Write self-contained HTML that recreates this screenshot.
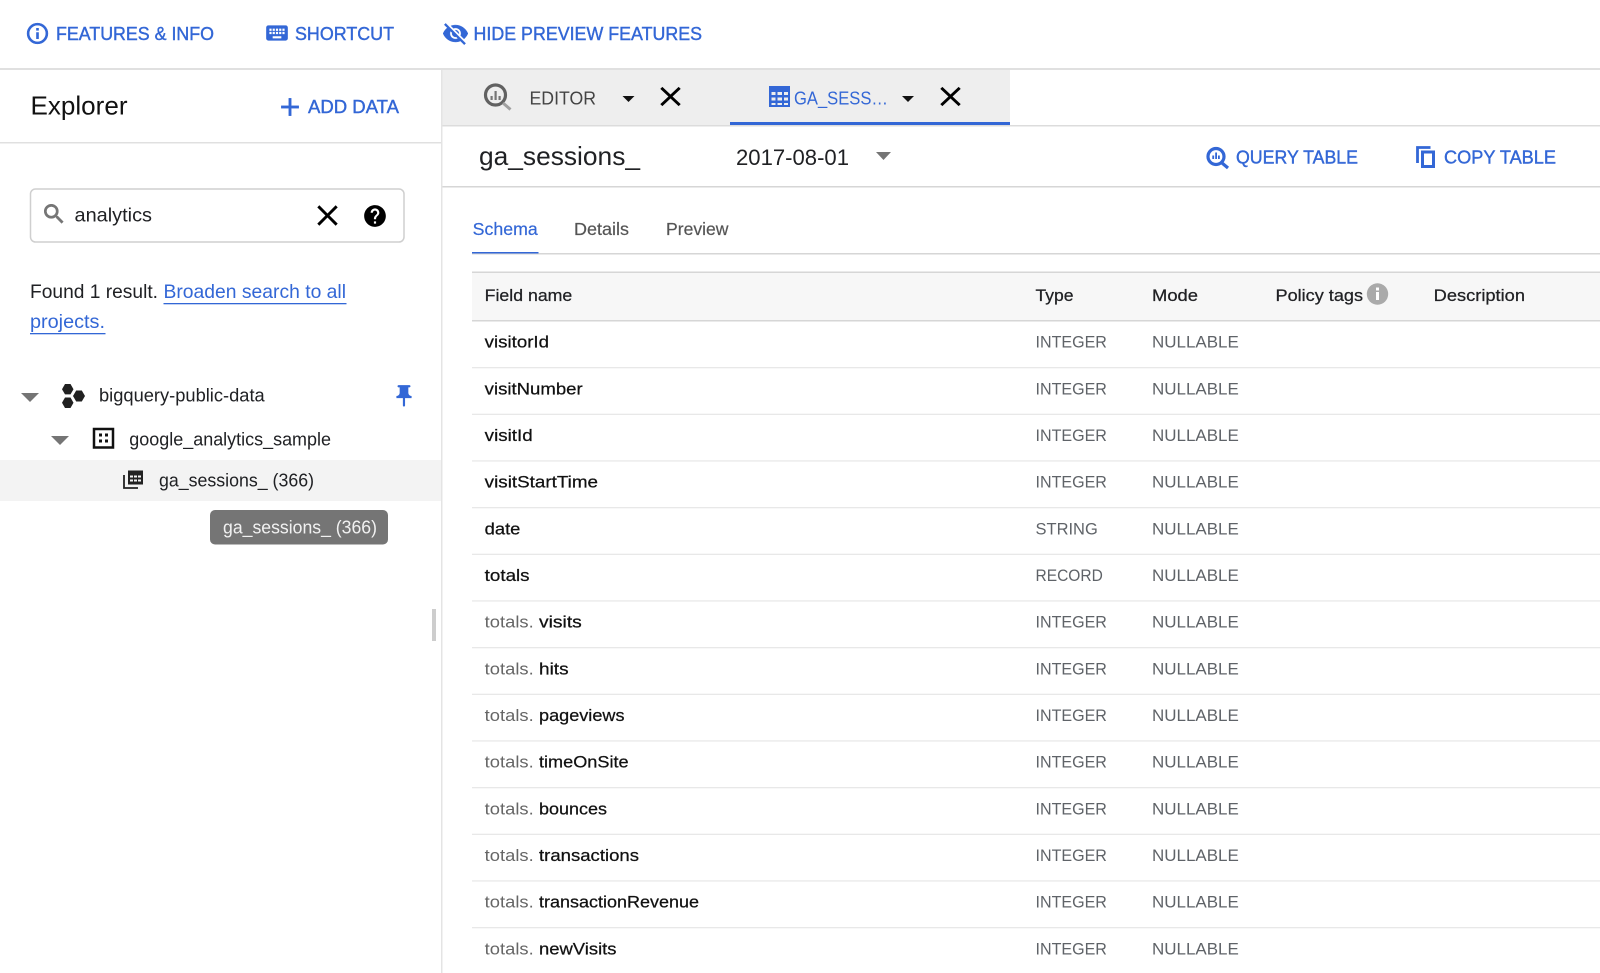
<!DOCTYPE html>
<html lang="en">
<head>
<meta charset="utf-8">
<title>BigQuery Explorer</title>
<style>
html,body{margin:0;padding:0;background:#fff;width:1600px;height:973px;overflow:hidden}
svg{display:block}
svg.root{filter:blur(.3px)}
text{font-family:"Liberation Sans",sans-serif;white-space:pre}
.b{fill:#3367d6;font-size:18.500px;stroke:#3367d6;stroke-width:.4px}
.f{fill:#111;font-size:17px;stroke:#111;stroke-width:.25px}
.g{fill:#666;font-size:17px}
.t{fill:#5f6368;font-size:17px}
.h{fill:#202124;font-size:17px;stroke:#202124;stroke-width:.25px}
.l{fill:#202124;font-size:18px}
</style>
</head>
<body>
<svg class="root" width="1600" height="973" viewBox="0 0 1600 973" xmlns="http://www.w3.org/2000/svg">
<rect width="1600" height="973" fill="#fff"/>

<!-- top bar -->
<rect x="0" y="68" width="1600" height="2" fill="#e0e0e0"/>
<svg x="25" y="21" width="25" height="25" viewBox="0 0 24 24" fill="#3367d6" stroke="#3367d6" stroke-width=".5"><path d="M11 7h2v2h-2zm0 4h2v6h-2zm1-9C6.48 2 2 6.48 2 12s4.48 10 10 10 10-4.48 10-10S17.52 2 12 2zm0 18c-4.41 0-8-3.59-8-8s3.59-8 8-8 8 3.59 8 8-3.59 8-8 8z"/></svg>
<text class="b" x="56" y="40" textLength="158" lengthAdjust="spacingAndGlyphs">FEATURES &amp; INFO</text>
<svg x="264" y="20" width="26" height="26" viewBox="0 0 24 24" fill="#3367d6"><path d="M20 5H4c-1.1 0-1.99.9-1.99 2L2 17c0 1.1.9 2 2 2h16c1.1 0 2-.9 2-2V7c0-1.1-.9-2-2-2zm-9 3h2v2h-2V8zm0 3h2v2h-2v-2zM8 8h2v2H8V8zm0 3h2v2H8v-2zm-1 2H5v-2h2v2zm0-3H5V8h2v2zm9 7H8v-2h8v2zm0-4h-2v-2h2v2zm0-3h-2V8h2v2zm3 3h-2v-2h2v2zm0-3h-2V8h2v2z"/></svg>
<text class="b" x="295" y="40" textLength="99" lengthAdjust="spacingAndGlyphs">SHORTCUT</text>
<svg x="442" y="20" width="27" height="27" viewBox="0 0 24 24" fill="#3367d6" stroke="#3367d6" stroke-width=".4"><path d="M12 7c2.76 0 5 2.24 5 5 0 .65-.13 1.26-.36 1.83l2.92 2.92c1.51-1.26 2.7-2.89 3.43-4.75-1.73-4.39-6-7.5-11-7.5-1.4 0-2.74.25-3.98.7l2.16 2.16C10.74 7.13 11.35 7 12 7zM2 4.27l2.28 2.28.46.46C3.08 8.3 1.78 10.02 1 12c1.73 4.39 6 7.5 11 7.5 1.55 0 3.03-.3 4.38-.84l.42.42L19.73 22 21 20.73 3.27 3 2 4.27zM7.53 9.8l1.55 1.55c-.05.21-.08.43-.08.65 0 1.66 1.34 3 3 3 .22 0 .44-.03.65-.08l1.55 1.55c-.67.33-1.41.53-2.2.53-2.76 0-5-2.24-5-5 0-.79.2-1.53.53-2.2zm4.31-.78l3.15 3.15.02-.16c0-1.66-1.34-3-3-3l-.17.01z"/></svg>
<text class="b" x="473.500" y="40" textLength="228.500" lengthAdjust="spacingAndGlyphs">HIDE PREVIEW FEATURES</text>

<!-- sidebar -->
<rect x="441" y="70" width="1.500" height="903" fill="#e4e4e4"/>
<text x="30.500" y="114.500" font-size="26" fill="#111" textLength="97" lengthAdjust="spacingAndGlyphs">Explorer</text>
<svg x="275" y="92" width="30" height="30" viewBox="0 0 24 24" fill="#3367d6" stroke="#3367d6" stroke-width=".3"><path d="M19 13h-6v6h-2v-6H5v-2h6V5h2v6h6v2z"/></svg>
<text class="b" x="308" y="113" textLength="91" lengthAdjust="spacingAndGlyphs">ADD DATA</text>
<rect x="0" y="142" width="441" height="1.500" fill="#e0e0e0"/>

<rect x="30.500" y="189" width="373.500" height="53" rx="5" fill="#fff" stroke="#cfcfcf" stroke-width="1.500"/>
<svg x="41" y="201" width="26" height="26" viewBox="0 0 24 24" fill="#757575" stroke="#757575" stroke-width=".5"><path d="M15.500 14h-.79l-.28-.27C15.410 12.590 16 11.110 16 9.500 16 5.910 13.090 3 9.500 3S3 5.910 3 9.500 5.910 16 9.500 16c1.610 0 3.090-.59 4.230-1.570l.27.28v.79l5 4.990L20.490 19l-4.990-5zm-6 0C7.010 14 5 11.990 5 9.500S7.010 5 9.500 5 14 7.010 14 9.500 11.990 14 9.500 14z"/></svg>
<text x="74.500" y="221.700" font-size="19.500" fill="#202124" textLength="77.500" lengthAdjust="spacingAndGlyphs">analytics</text>
<svg x="310" y="198" width="35" height="35" viewBox="0 0 24 24" fill="#000"><path d="M19 6.410L17.590 5 12 10.590 6.410 5 5 6.410 10.590 12 5 17.590 6.410 19 12 13.410 17.590 19 19 17.590 13.410 12z"/></svg>
<svg x="362" y="203" width="26" height="26" viewBox="0 0 24 24" fill="#000"><path d="M12 2C6.480 2 2 6.480 2 12s4.480 10 10 10 10-4.480 10-10S17.520 2 12 2zm1 17h-2v-2h2v2zm2.070-7.750l-.9.92C13.450 12.900 13 13.500 13 15h-2v-.5c0-1.100.45-2.100 1.170-2.830l1.240-1.260c.37-.36.59-.86.59-1.410 0-1.100-.9-2-2-2s-2 .9-2 2H8c0-2.210 1.790-4 4-4s4 1.790 4 4c0 .88-.36 1.680-.93 2.250z"/></svg>

<text x="30" y="298" font-size="19.500" fill="#202124" textLength="128" lengthAdjust="spacingAndGlyphs">Found 1 result.</text>
<text x="163.500" y="298" font-size="19.500" fill="#3367d6" textLength="182.500" lengthAdjust="spacingAndGlyphs">Broaden search to all</text>
<rect x="163.500" y="303" width="183" height="1.300" fill="#3367d6"/>
<text x="30" y="328" font-size="19.500" fill="#3367d6" textLength="75" lengthAdjust="spacingAndGlyphs">projects.</text>
<rect x="30" y="333" width="75.500" height="1.300" fill="#3367d6"/>

<!-- tree -->
<path d="M21 393h18l-9 9z" fill="#757575"/>
<g fill="#212121">
<path d="M65 384h5.500l3 5.200-3 5.200H65l-3-5.200z"/>
<path d="M65 397.500h5.500l3 5.200-3 5.300H65l-3-5.300z"/>
<path d="M76.200 390.500h5.600l3.200 5.500-3.200 5.500h-5.600l-3.200-5.500z"/>
</g>
<text class="l" x="99" y="401.700" textLength="165.700" lengthAdjust="spacingAndGlyphs">bigquery-public-data</text>
<svg x="391" y="383" width="26" height="26" viewBox="0 0 24 24" fill="#3367d6"><path d="M16 9V4h1c.55 0 1-.45 1-1s-.45-1-1-1H7c-.55 0-1 .45-1 1s.45 1 1 1h1v5c0 1.660-1.340 3-3 3v2h5.970v7l1 1 1-1v-7H19v-2c-1.660 0-3-1.340-3-3z"/></svg>
<path d="M51 436h18l-9 9z" fill="#757575"/>
<rect x="94" y="429" width="19" height="18.500" fill="none" stroke="#111" stroke-width="2.500"/>
<g fill="#111"><rect x="99" y="433.500" width="3" height="3"/><rect x="105" y="433.500" width="3" height="3"/><rect x="99" y="439.500" width="3" height="3"/><rect x="105" y="439.500" width="3" height="3"/></g>
<text class="l" x="129.300" y="445.300" textLength="201.700" lengthAdjust="spacingAndGlyphs">google_analytics_sample</text>
<rect x="0" y="460" width="441" height="41" fill="#f3f3f3"/>
<g fill="none" stroke="#222" stroke-width="1.800">
<path d="M124 475v13h14"/>
<rect x="128" y="470.500" width="15" height="14" fill="#222" stroke="none"/>
</g>
<g fill="#f3f3f3"><rect x="130" y="475.500" width="3" height="2"/><rect x="134" y="475.500" width="3" height="2"/><rect x="138" y="475.500" width="3" height="2"/><rect x="130" y="479.500" width="3" height="2"/><rect x="134" y="479.500" width="3" height="2"/><rect x="138" y="479.500" width="3" height="2"/></g>
<text class="l" x="159" y="486.700" textLength="155" lengthAdjust="spacingAndGlyphs">ga_sessions_ (366)</text>
<rect x="210" y="510" width="178" height="34.500" rx="5" fill="#757575"/>
<text x="223" y="533.300" font-size="18" fill="#f1f1f1" textLength="154" lengthAdjust="spacingAndGlyphs">ga_sessions_ (366)</text>
<rect x="432" y="609" width="4" height="32" fill="#cdcdcd"/>

<!-- tab bar -->
<rect x="442.500" y="70" width="567.500" height="55" fill="#eeeeee"/>
<rect x="442.500" y="125" width="1157.500" height="1.500" fill="#dcdcdc"/>
<g fill="none" stroke="#616161" stroke-width="3.200">
<circle cx="495.500" cy="95" r="10"/>
<path d="M503 103l7.500 6.500" stroke="#a0a0a0" stroke-width="3"/>
</g>
<g fill="#757575"><rect x="494.500" y="91" width="2.200" height="9"/><rect x="490.500" y="96" width="2.200" height="4"/><rect x="498.500" y="96" width="2.200" height="4"/></g>
<text x="529.500" y="104.500" font-size="18.500" fill="#444" textLength="66.500" lengthAdjust="spacingAndGlyphs">EDITOR</text>
<path d="M622.500 96h12l-6 6z" fill="#111"/>
<svg x="653" y="80" width="35" height="33" viewBox="0 0 24 24" preserveAspectRatio="none" fill="#000"><path d="M19 6.410L17.590 5 12 10.590 6.410 5 5 6.410 10.590 12 5 17.590 6.410 19 12 13.410 17.590 19 19 17.590 13.410 12z"/></svg>
<path fill-rule="evenodd" d="M769 86h21v21h-21zM771.500 92v3h4v-3zm6 0v3h4.500v-3zm6.500 0v3h4v-3zM771.500 97.500v3h4v-3zm6 0v3h4.500v-3zm6.500 0v3h4v-3zM771.500 103v2h4v-2zm6 0v2h4.500v-2zm6.500 0v2h4v-2z" fill="#3367d6"/>
<text x="794" y="104.500" font-size="18.500" fill="#3367d6" textLength="94" lengthAdjust="spacingAndGlyphs">GA_SESS…</text>
<path d="M902 96h12l-6 6z" fill="#111"/>
<svg x="933" y="80" width="35" height="33" viewBox="0 0 24 24" preserveAspectRatio="none" fill="#000"><path d="M19 6.410L17.590 5 12 10.590 6.410 5 5 6.410 10.590 12 5 17.590 6.410 19 12 13.410 17.590 19 19 17.590 13.410 12z"/></svg>
<rect x="730" y="122" width="280" height="3" fill="#3367d6"/>

<!-- title row -->
<text x="479" y="165" font-size="26" fill="#202124" textLength="161" lengthAdjust="spacingAndGlyphs">ga_sessions_</text>
<text x="736" y="165" font-size="22" fill="#202124" textLength="113" lengthAdjust="spacingAndGlyphs">2017-08-01</text>
<path d="M876 152h15l-7.500 8z" fill="#757575"/>
<g fill="none" stroke="#3367d6" stroke-width="3.200"><circle cx="1216" cy="156.500" r="8"/><path d="M1222 163l6 5"/></g>
<g fill="#3367d6"><rect x="1215.200" y="152.500" width="1.800" height="6.500"/><rect x="1212.300" y="155.500" width="1.800" height="3.500"/><rect x="1218" y="155.500" width="1.800" height="3.500"/></g>
<text class="b" x="1236" y="163.300" textLength="122" lengthAdjust="spacingAndGlyphs">QUERY TABLE</text>
<path d="M1417.500 163v-15.500h13" fill="none" stroke="#3367d6" stroke-width="2.800"/>
<rect x="1422.500" y="152" width="11" height="14.500" fill="none" stroke="#3367d6" stroke-width="3"/>
<text class="b" x="1444" y="163.300" textLength="112" lengthAdjust="spacingAndGlyphs">COPY TABLE</text>
<rect x="442.500" y="186" width="1157.500" height="1.500" fill="#d6d6d6"/>

<!-- tabs -->
<text x="472.700" y="235" font-size="17.500" fill="#3367d6" stroke="#3367d6" stroke-width=".2" textLength="65" lengthAdjust="spacingAndGlyphs">Schema</text>
<text x="574" y="235" font-size="17.500" fill="#555" stroke="#555" stroke-width=".2" textLength="55" lengthAdjust="spacingAndGlyphs">Details</text>
<text x="666" y="235" font-size="17.500" fill="#555" stroke="#555" stroke-width=".2" textLength="62.500" lengthAdjust="spacingAndGlyphs">Preview</text>
<rect x="472" y="253" width="1128" height="1.500" fill="#d6d6d6"/>
<rect x="472" y="252" width="66.500" height="1.500" fill="#3367d6"/>

<!-- table header -->
<rect x="472" y="272" width="1128" height="49" fill="#f7f7f7"/>
<rect x="472" y="271.500" width="1128" height="1.500" fill="#d6d6d6"/>
<rect x="472" y="320" width="1128" height="1.500" fill="#d6d6d6"/>
<text class="h" x="484.700" y="301" textLength="87.600" lengthAdjust="spacingAndGlyphs">Field name</text>
<text class="h" x="1035.500" y="301" textLength="38" lengthAdjust="spacingAndGlyphs">Type</text>
<text class="h" x="1152" y="301" textLength="46" lengthAdjust="spacingAndGlyphs">Mode</text>
<text class="h" x="1275.500" y="301" textLength="87.500" lengthAdjust="spacingAndGlyphs">Policy tags</text>
<circle cx="1377.500" cy="294" r="10.700" fill="#aaaaaa"/>
<rect x="1376" y="292" width="3" height="8" fill="#fff"/><rect x="1376" y="287.500" width="3" height="3" fill="#fff"/>
<text class="h" x="1433.700" y="301" textLength="91.300" lengthAdjust="spacingAndGlyphs">Description</text>

<!-- row lines -->
<g fill="#e8e8e8">
<rect x="472" y="367" width="1128" height="1.300"/><rect x="472" y="413.700" width="1128" height="1.300"/><rect x="472" y="460.300" width="1128" height="1.300"/><rect x="472" y="507" width="1128" height="1.300"/><rect x="472" y="553.700" width="1128" height="1.300"/><rect x="472" y="600.300" width="1128" height="1.300"/><rect x="472" y="647" width="1128" height="1.300"/><rect x="472" y="693.700" width="1128" height="1.300"/><rect x="472" y="740.300" width="1128" height="1.300"/><rect x="472" y="787" width="1128" height="1.300"/><rect x="472" y="833.700" width="1128" height="1.300"/><rect x="472" y="880.300" width="1128" height="1.300"/><rect x="472" y="927" width="1128" height="1.300"/>
</g>

<!-- rows -->
<text class="f" x="484.700" y="347.700" textLength="64.300" lengthAdjust="spacingAndGlyphs">visitorId</text>
<text class="t" x="1035.500" y="347.700" textLength="71.400" lengthAdjust="spacingAndGlyphs">INTEGER</text>
<text class="t" x="1152" y="347.700" textLength="86.800" lengthAdjust="spacingAndGlyphs">NULLABLE</text>

<text class="f" x="484.700" y="394.400" textLength="98" lengthAdjust="spacingAndGlyphs">visitNumber</text>
<text class="t" x="1035.500" y="394.400" textLength="71.400" lengthAdjust="spacingAndGlyphs">INTEGER</text>
<text class="t" x="1152" y="394.400" textLength="86.800" lengthAdjust="spacingAndGlyphs">NULLABLE</text>

<text class="f" x="484.700" y="441" textLength="48" lengthAdjust="spacingAndGlyphs">visitId</text>
<text class="t" x="1035.500" y="441" textLength="71.400" lengthAdjust="spacingAndGlyphs">INTEGER</text>
<text class="t" x="1152" y="441" textLength="86.800" lengthAdjust="spacingAndGlyphs">NULLABLE</text>

<text class="f" x="484.700" y="487.700" textLength="113.300" lengthAdjust="spacingAndGlyphs">visitStartTime</text>
<text class="t" x="1035.500" y="487.700" textLength="71.400" lengthAdjust="spacingAndGlyphs">INTEGER</text>
<text class="t" x="1152" y="487.700" textLength="86.800" lengthAdjust="spacingAndGlyphs">NULLABLE</text>

<text class="f" x="484.700" y="534.400" textLength="35.700" lengthAdjust="spacingAndGlyphs">date</text>
<text class="t" x="1035.500" y="534.400" textLength="62.300" lengthAdjust="spacingAndGlyphs">STRING</text>
<text class="t" x="1152" y="534.400" textLength="86.800" lengthAdjust="spacingAndGlyphs">NULLABLE</text>

<text class="f" x="484.700" y="581" textLength="44.900" lengthAdjust="spacingAndGlyphs">totals</text>
<text class="t" x="1035.500" y="581" textLength="67.300" lengthAdjust="spacingAndGlyphs">RECORD</text>
<text class="t" x="1152" y="581" textLength="86.800" lengthAdjust="spacingAndGlyphs">NULLABLE</text>

<text class="g" x="484.700" y="627.700" textLength="49" lengthAdjust="spacingAndGlyphs">totals.</text>
<text class="f" x="539" y="627.700" textLength="42.800" lengthAdjust="spacingAndGlyphs">visits</text>
<text class="t" x="1035.500" y="627.700" textLength="71.400" lengthAdjust="spacingAndGlyphs">INTEGER</text>
<text class="t" x="1152" y="627.700" textLength="86.800" lengthAdjust="spacingAndGlyphs">NULLABLE</text>

<text class="g" x="484.700" y="674.400" textLength="49" lengthAdjust="spacingAndGlyphs">totals.</text>
<text class="f" x="539" y="674.400" textLength="29.600" lengthAdjust="spacingAndGlyphs">hits</text>
<text class="t" x="1035.500" y="674.400" textLength="71.400" lengthAdjust="spacingAndGlyphs">INTEGER</text>
<text class="t" x="1152" y="674.400" textLength="86.800" lengthAdjust="spacingAndGlyphs">NULLABLE</text>

<text class="g" x="484.700" y="721" textLength="49" lengthAdjust="spacingAndGlyphs">totals.</text>
<text class="f" x="539" y="721" textLength="85.500" lengthAdjust="spacingAndGlyphs">pageviews</text>
<text class="t" x="1035.500" y="721" textLength="71.400" lengthAdjust="spacingAndGlyphs">INTEGER</text>
<text class="t" x="1152" y="721" textLength="86.800" lengthAdjust="spacingAndGlyphs">NULLABLE</text>

<text class="g" x="484.700" y="767.700" textLength="49" lengthAdjust="spacingAndGlyphs">totals.</text>
<text class="f" x="539" y="767.700" textLength="89.600" lengthAdjust="spacingAndGlyphs">timeOnSite</text>
<text class="t" x="1035.500" y="767.700" textLength="71.400" lengthAdjust="spacingAndGlyphs">INTEGER</text>
<text class="t" x="1152" y="767.700" textLength="86.800" lengthAdjust="spacingAndGlyphs">NULLABLE</text>

<text class="g" x="484.700" y="814.400" textLength="49" lengthAdjust="spacingAndGlyphs">totals.</text>
<text class="f" x="539" y="814.400" textLength="68" lengthAdjust="spacingAndGlyphs">bounces</text>
<text class="t" x="1035.500" y="814.400" textLength="71.400" lengthAdjust="spacingAndGlyphs">INTEGER</text>
<text class="t" x="1152" y="814.400" textLength="86.800" lengthAdjust="spacingAndGlyphs">NULLABLE</text>

<text class="g" x="484.700" y="861" textLength="49" lengthAdjust="spacingAndGlyphs">totals.</text>
<text class="f" x="539" y="861" textLength="100" lengthAdjust="spacingAndGlyphs">transactions</text>
<text class="t" x="1035.500" y="861" textLength="71.400" lengthAdjust="spacingAndGlyphs">INTEGER</text>
<text class="t" x="1152" y="861" textLength="86.800" lengthAdjust="spacingAndGlyphs">NULLABLE</text>

<text class="g" x="484.700" y="907.700" textLength="49" lengthAdjust="spacingAndGlyphs">totals.</text>
<text class="f" x="539" y="907.700" textLength="160" lengthAdjust="spacingAndGlyphs">transactionRevenue</text>
<text class="t" x="1035.500" y="907.700" textLength="71.400" lengthAdjust="spacingAndGlyphs">INTEGER</text>
<text class="t" x="1152" y="907.700" textLength="86.800" lengthAdjust="spacingAndGlyphs">NULLABLE</text>

<text class="g" x="484.700" y="954.400" textLength="49" lengthAdjust="spacingAndGlyphs">totals.</text>
<text class="f" x="539" y="954.400" textLength="77.500" lengthAdjust="spacingAndGlyphs">newVisits</text>
<text class="t" x="1035.500" y="954.400" textLength="71.400" lengthAdjust="spacingAndGlyphs">INTEGER</text>
<text class="t" x="1152" y="954.400" textLength="86.800" lengthAdjust="spacingAndGlyphs">NULLABLE</text>
</svg>
</body>
</html>
